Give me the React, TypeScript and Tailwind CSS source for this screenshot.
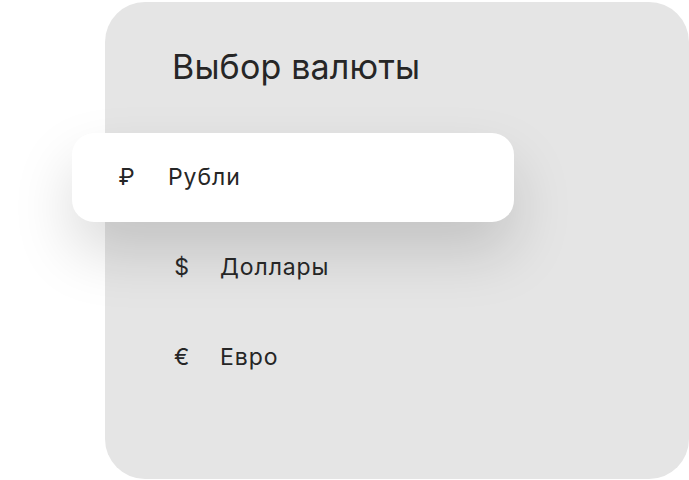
const currencies = [
  { symbol: "₽", label: "Рубли", active: true },
  { symbol: "$", label: "Доллары", active: false },
  { symbol: "€", label: "Евро", active: false },
];

export default function App() {
  return (
    <div
      className="w-[689px] h-[480px] bg-white flex pl-[105px] pt-[2px] overflow-hidden"
      style={{ fontFamily: "Inter, 'Noto Sans', sans-serif" }}
    >
      <div className="w-[584px] h-[477px] shrink-0 rounded-[40px] bg-[#e5e5e5] pl-[67px] pt-[45px] flex flex-col">
        <h1 className="text-[34px] leading-[40px] text-[#262626] font-normal tracking-[0.005em]">Выбор валюты</h1>
        <ul className="mt-[46px] flex flex-col">
          {currencies.map((c) =>
            c.active ? (
              <li
                key={c.label}
                className="-ml-[100px] w-[442px] h-[89px] rounded-[22px] bg-white pl-[45px] flex items-center gap-[31px] text-[23px] tracking-[0.04em] text-[#262626] shadow-[0_30px_60px_rgba(0,0,0,0.15)]"
              >
                <span className="w-[20px] text-center">{c.symbol}</span>
                <span>{c.label}</span>
              </li>
            ) : (
              <li
                key={c.label}
                className="h-[90px] flex items-center gap-[28px] text-[23px] tracking-[0.04em] text-[#262626]"
              >
                <span className="w-[20px] text-center">{c.symbol}</span>
                <span>{c.label}</span>
              </li>
            )
          )}
        </ul>
      </div>
    </div>
  );
}
